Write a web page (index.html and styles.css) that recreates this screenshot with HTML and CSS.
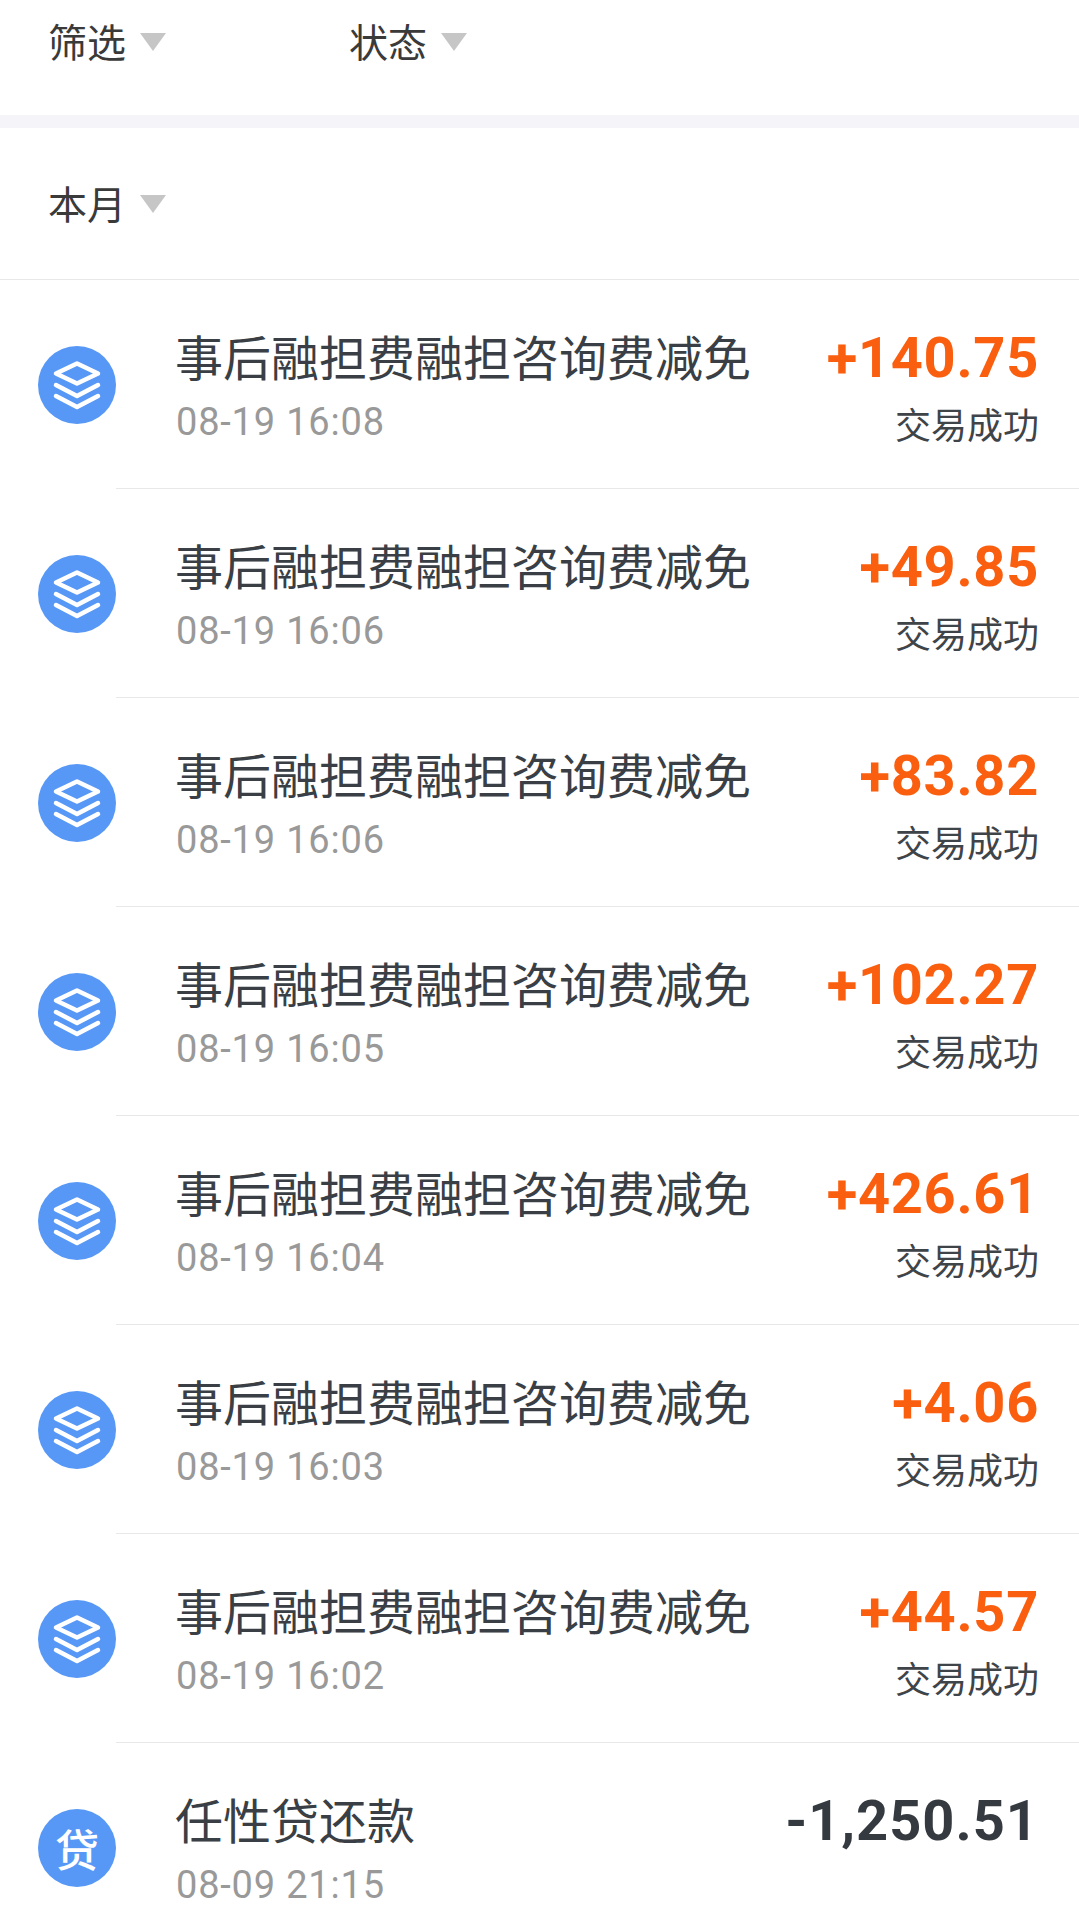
FILE: index.html
```html
<!DOCTYPE html>
<html lang="zh-CN">
<head>
<meta charset="utf-8">
<title>账单</title>
<link rel="stylesheet" href="styles.css">
</head>
<body>
<div class="page">
  <div class="filters">
    <div class="filter filter-first"><span>筛选</span><i class="caret"></i></div>
    <div class="filter"><span>状态</span><i class="caret"></i></div>
  </div>
  <div class="band"></div>
  <div class="month"><div class="filter"><span>本月</span><i class="caret"></i></div></div>
  <div class="list">
    <div class="row">
      <div class="icon"><svg viewBox="-39 -39 78 78" class="layers"><path d="M0-21.500 21-11.500 0-1.500-21-11.500Z"/><path d="M-21 0 0 11 21 0"/><path d="M-21 11 0 22 21 11"/></svg></div>
      <div class="body"><div class="info"><div class="title">事后融担费融担咨询费减免</div><div class="date">08-19 16:08</div></div><div class="side"><div class="amount plus">+140.75</div><div class="status">交易成功</div></div></div>
    </div>
    <div class="row">
      <div class="icon"><svg viewBox="-39 -39 78 78" class="layers"><path d="M0-21.500 21-11.500 0-1.500-21-11.500Z"/><path d="M-21 0 0 11 21 0"/><path d="M-21 11 0 22 21 11"/></svg></div>
      <div class="body"><div class="info"><div class="title">事后融担费融担咨询费减免</div><div class="date">08-19 16:06</div></div><div class="side"><div class="amount plus">+49.85</div><div class="status">交易成功</div></div></div>
    </div>
    <div class="row">
      <div class="icon"><svg viewBox="-39 -39 78 78" class="layers"><path d="M0-21.500 21-11.500 0-1.500-21-11.500Z"/><path d="M-21 0 0 11 21 0"/><path d="M-21 11 0 22 21 11"/></svg></div>
      <div class="body"><div class="info"><div class="title">事后融担费融担咨询费减免</div><div class="date">08-19 16:06</div></div><div class="side"><div class="amount plus">+83.82</div><div class="status">交易成功</div></div></div>
    </div>
    <div class="row">
      <div class="icon"><svg viewBox="-39 -39 78 78" class="layers"><path d="M0-21.500 21-11.500 0-1.500-21-11.500Z"/><path d="M-21 0 0 11 21 0"/><path d="M-21 11 0 22 21 11"/></svg></div>
      <div class="body"><div class="info"><div class="title">事后融担费融担咨询费减免</div><div class="date">08-19 16:05</div></div><div class="side"><div class="amount plus">+102.27</div><div class="status">交易成功</div></div></div>
    </div>
    <div class="row">
      <div class="icon"><svg viewBox="-39 -39 78 78" class="layers"><path d="M0-21.500 21-11.500 0-1.500-21-11.500Z"/><path d="M-21 0 0 11 21 0"/><path d="M-21 11 0 22 21 11"/></svg></div>
      <div class="body"><div class="info"><div class="title">事后融担费融担咨询费减免</div><div class="date">08-19 16:04</div></div><div class="side"><div class="amount plus">+426.61</div><div class="status">交易成功</div></div></div>
    </div>
    <div class="row">
      <div class="icon"><svg viewBox="-39 -39 78 78" class="layers"><path d="M0-21.500 21-11.500 0-1.500-21-11.500Z"/><path d="M-21 0 0 11 21 0"/><path d="M-21 11 0 22 21 11"/></svg></div>
      <div class="body"><div class="info"><div class="title">事后融担费融担咨询费减免</div><div class="date">08-19 16:03</div></div><div class="side"><div class="amount plus">+4.06</div><div class="status">交易成功</div></div></div>
    </div>
    <div class="row">
      <div class="icon"><svg viewBox="-39 -39 78 78" class="layers"><path d="M0-21.500 21-11.500 0-1.500-21-11.500Z"/><path d="M-21 0 0 11 21 0"/><path d="M-21 11 0 22 21 11"/></svg></div>
      <div class="body"><div class="info"><div class="title">事后融担费融担咨询费减免</div><div class="date">08-19 16:02</div></div><div class="side"><div class="amount plus">+44.57</div><div class="status">交易成功</div></div></div>
    </div>
    <div class="row row-last">
      <div class="icon icon-text">贷</div>
      <div class="body"><div class="info"><div class="title">任性贷还款</div><div class="date">08-09 21:15</div></div><div class="side"><div class="amount minus">-1,250.51</div></div></div>
    </div>
  </div>
</div>
</body>
</html>
```
FILE: styles.css
```css
* { box-sizing: border-box; }
html, body { margin: 0; padding: 0; background: #fff; }
body { font-family: "Noto Sans CJK SC", "Noto Sans", sans-serif; color: #3a3d42; overflow: hidden; }
.page { width: 1079px; height: 1926px; overflow: hidden; }
.filters { height: 115px; display: flex; padding: 18px 0 0 48px; align-items: flex-start; }
.filter { display: flex; align-items: center; height: 44px; font-size: 39px; line-height: 44px; color: #3a3a3a; }
.filter-first { width: 301px; }
.caret { width: 0; height: 0; margin: 4px 0 0 14px; border-left: 13.5px solid transparent; border-right: 13.5px solid transparent; border-top: 18px solid #c6c6c6; }
.band { height: 13px; background: #f4f4f9; }
.month { height: 152px; padding: 52px 0 0 48px; border-bottom: 1px solid #e8e8e8; }
.list { display: flex; flex-direction: column; }
.row { display: flex; height: 209px; padding-left: 38px; }
.row-last { height: 183px; }
.icon { flex: none; width: 78px; height: 78px; margin-top: 66px; border-radius: 50%; background: #5798f6; color: #fff; }
.layers { display: block; width: 78px; height: 78px; fill: none; stroke: #fff; stroke-width: 4.5; stroke-linecap: round; stroke-linejoin: round; }
.icon-text { display: flex; align-items: center; justify-content: center; font-size: 44px; font-weight: 500; line-height: 78px; }
.body { flex: 1; min-width: 0; display: flex; justify-content: space-between; padding: 45px 40px 0 59px; border-bottom: 1px solid #e8e8e8; }
.row-last .body { border-bottom: 0; }
.title { font-size: 48px; line-height: 60px; color: #3a3f45; white-space: nowrap; }
.date { margin-top: 17px; padding-left: 1px; font-family: Roboto, "Noto Sans", sans-serif; font-size: 38px; line-height: 40px; color: #999; letter-spacing: 0.8px; white-space: nowrap; }
.side { display: flex; flex-direction: column; align-items: flex-end; padding-top: 3px; }
.amount { font-family: Roboto, "Noto Sans", sans-serif; font-size: 56px; font-weight: 700; line-height: 60px; letter-spacing: 0.7px; white-space: nowrap; }
.plus { color: #fa5f0f; }
.minus { color: #343a40; letter-spacing: 1px; }
.status { margin-top: 13px; font-size: 36px; line-height: 44px; color: #3f4449; white-space: nowrap; }
```
